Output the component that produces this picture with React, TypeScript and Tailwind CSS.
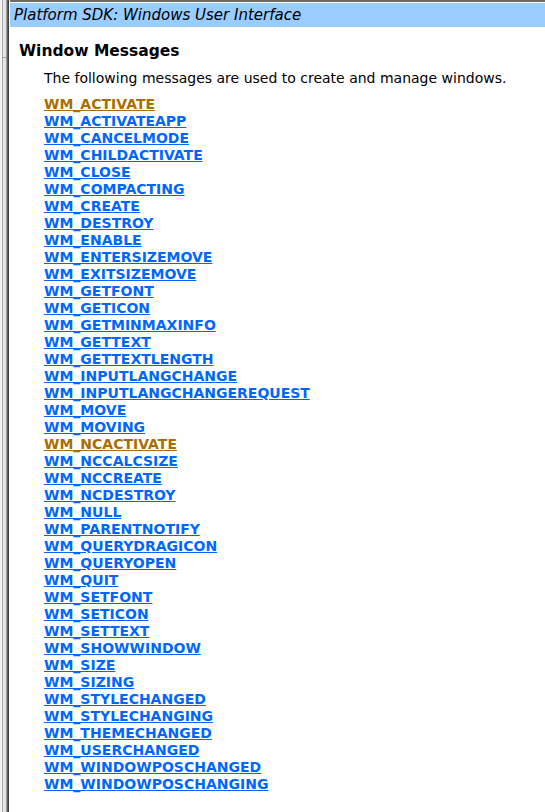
import React from 'react';

const visited = ['WM_ACTIVATE', 'WM_NCACTIVATE'];

const messages = [
  'WM_ACTIVATE',
  'WM_ACTIVATEAPP',
  'WM_CANCELMODE',
  'WM_CHILDACTIVATE',
  'WM_CLOSE',
  'WM_COMPACTING',
  'WM_CREATE',
  'WM_DESTROY',
  'WM_ENABLE',
  'WM_ENTERSIZEMOVE',
  'WM_EXITSIZEMOVE',
  'WM_GETFONT',
  'WM_GETICON',
  'WM_GETMINMAXINFO',
  'WM_GETTEXT',
  'WM_GETTEXTLENGTH',
  'WM_INPUTLANGCHANGE',
  'WM_INPUTLANGCHANGEREQUEST',
  'WM_MOVE',
  'WM_MOVING',
  'WM_NCACTIVATE',
  'WM_NCCALCSIZE',
  'WM_NCCREATE',
  'WM_NCDESTROY',
  'WM_NULL',
  'WM_PARENTNOTIFY',
  'WM_QUERYDRAGICON',
  'WM_QUERYOPEN',
  'WM_QUIT',
  'WM_SETFONT',
  'WM_SETICON',
  'WM_SETTEXT',
  'WM_SHOWWINDOW',
  'WM_SIZE',
  'WM_SIZING',
  'WM_STYLECHANGED',
  'WM_STYLECHANGING',
  'WM_THEMECHANGED',
  'WM_USERCHANGED',
  'WM_WINDOWPOSCHANGED',
  'WM_WINDOWPOSCHANGING',
];

const App: React.FC = () => {
  return (
    <div className="flex h-[812px] w-[545px] overflow-hidden bg-white font-['DejaVu_Sans',Verdana,sans-serif]">
      {/* left frame edge */}
      <div className="flex h-full shrink-0">
        <div className="w-[2px] bg-[#f4f4f4]" />
        <div className="w-px bg-[#a8a8a8]" />
        <div className="flex w-[3px] flex-col bg-[#e4e4e4]">
          <div className="h-[57px]" />
          <div className="h-px bg-[#a8a8a8]" />
        </div>
        <div className="w-px bg-[#9a9a9a]" />
        <div className="w-px bg-[#606060]" />
        <div className="w-px bg-[#404040]" />
        <div className="w-px bg-white" />
      </div>

      <div className="min-w-0 flex-1">
        <div className="h-[2px] bg-[#6a6a6a]" />
        <div className="h-px bg-white" />
        <div className="flex h-[24px] items-center whitespace-nowrap bg-[#99ccff] pl-[4px] pt-px text-[15px] italic text-black">
          Platform SDK: Windows User Interface
        </div>

        <div className="pl-[9px] pt-[14px]">
          <h1 className="text-[15.5px] font-bold leading-[20px] text-black">Window Messages</h1>
        </div>

        <div className="pl-[34px] pt-[9px]">
          <p className="whitespace-nowrap text-[14px] leading-[17px] text-black">
            The following messages are used to create and manage windows.
          </p>
          <ul className="pt-[9px]">
            {messages.map((m) => (
              <li key={m} className="text-[14px] leading-[17px]">
                <a
                  href="#"
                  className={
                    visited.includes(m)
                      ? 'font-bold text-[#a86e00] underline'
                      : 'font-bold text-[#0066ff] underline'
                  }
                >
                  {m}
                </a>
              </li>
            ))}
          </ul>
        </div>
      </div>
    </div>
  );
};

export default App;
